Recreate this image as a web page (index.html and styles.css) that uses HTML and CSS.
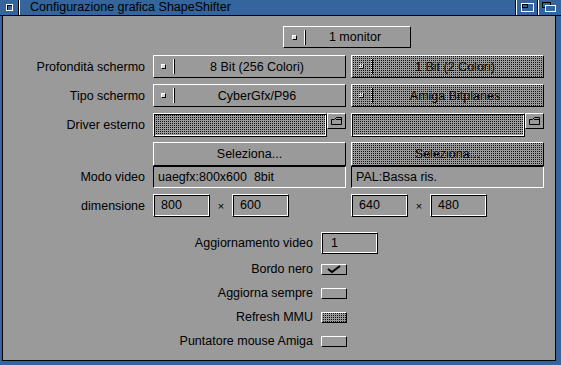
FILE: index.html
```html
<!DOCTYPE html>
<html lang="it">
<head>
    <meta charset="UTF-8">
    <title>Configurazione grafica ShapeShifter</title>
    <link rel="stylesheet" href="styles.css">
</head>
<body>
    <div class="window">
        <div class="titlebar">
            <div class="close-gad"><span class="close-box"></span></div>
            <div class="title">Configurazione grafica ShapeShifter</div>
            <div class="depth-gad zoom-gad">
                <svg width="22" height="15" viewBox="0 0 22 15">
                    <rect x="6.5" y="3.5" width="12" height="8" fill="none" stroke="#fff"/>
                    <rect x="7.5" y="4.5" width="5" height="3" fill="none" stroke="#000"/>
                </svg>
            </div>
            <div class="depth-gad back-gad">
                <svg width="24" height="15" viewBox="0 0 24 15">
                    <rect x="5.5" y="2.5" width="8" height="5" fill="none" stroke="#000"/>
                    <rect x="8.5" y="5.5" width="10" height="6" fill="#34659c" stroke="#fff"/>
                </svg>
            </div>
        </div>

        <div class="frame">
            <div class="monitor-row">
                <div class="cycle monitor">
                    <span class="cycle-icon"></span><span class="cycle-sep"></span>
                    <span class="cycle-text">1 monitor</span>
                </div>
            </div>

            <div class="row r1">
                <div class="label">Profondità schermo</div>
                <div class="cycle">
                    <span class="cycle-icon"></span><span class="cycle-sep"></span>
                    <span class="cycle-text">8 Bit (256 Colori)</span>
                </div>
                <div class="cycle ghost">
                    <span class="cycle-icon"></span><span class="cycle-sep"></span>
                    <span class="cycle-text">1 Bit (2 Colori)</span>
                </div>
            </div>

            <div class="row r2">
                <div class="label">Tipo schermo</div>
                <div class="cycle">
                    <span class="cycle-icon"></span><span class="cycle-sep"></span>
                    <span class="cycle-text">CyberGfx/P96</span>
                </div>
                <div class="cycle ghost">
                    <span class="cycle-icon"></span><span class="cycle-sep"></span>
                    <span class="cycle-text">Amiga Bitplanes</span>
                </div>
            </div>

            <div class="row r3">
                <div class="label">Driver esterno</div>
                <div class="driver">
                    <div class="string ghost wide"></div>
                    <div class="file-btn">
                        <svg width="17" height="13" viewBox="0 0 17 13">
                            <path d="M3.5 10.5V5.5H6.5L8.5 3.5H13.5V10.5Z" fill="none" stroke="#000"/>
                            <path d="M8 5.5H13" stroke="#000"/>
                        </svg>
                    </div>
                </div>
                <div class="driver">
                    <div class="string ghost wide"></div>
                    <div class="file-btn">
                        <svg width="17" height="13" viewBox="0 0 17 13">
                            <path d="M3.5 10.5V5.5H6.5L8.5 3.5H13.5V10.5Z" fill="none" stroke="#000"/>
                            <path d="M8 5.5H13" stroke="#000"/>
                        </svg>
                    </div>
                </div>
            </div>

            <div class="row r4">
                <div class="label"></div>
                <div class="button">Seleziona...</div>
                <div class="button ghost">Seleziona...</div>
            </div>

            <div class="row r5">
                <div class="label">Modo video</div>
                <div class="readout">uaegfx:800x600&nbsp;&nbsp;8bit</div>
                <div class="readout">PAL:Bassa ris.</div>
            </div>

            <div class="row r6">
                <div class="label">dimensione</div>
                <div class="dims">
                    <div class="string num">800</div>
                    <span class="times">×</span>
                    <div class="string num">600</div>
                </div>
                <div class="dims">
                    <div class="string num">640</div>
                    <span class="times">×</span>
                    <div class="string num">480</div>
                </div>
            </div>

            <div class="options">
                <div class="opt opt-field">
                    <div class="opt-label">Aggiornamento video</div>
                    <div class="string num">1</div>
                </div>
                <div class="opt">
                    <div class="opt-label">Bordo nero</div>
                    <div class="check">
                        <svg width="24" height="9" viewBox="0 0 24 9">
                            <path d="M6 4L10 7L18 1" fill="none" stroke="#000" stroke-width="2"/>
                        </svg>
                    </div>
                </div>
                <div class="opt">
                    <div class="opt-label">Aggiorna sempre</div>
                    <div class="check"></div>
                </div>
                <div class="opt">
                    <div class="opt-label">Refresh MMU</div>
                    <div class="check ghost"></div>
                </div>
                <div class="opt">
                    <div class="opt-label">Puntatore mouse Amiga</div>
                    <div class="check"></div>
                </div>
            </div>
        </div>
    </div>
</body>
</html>
```

FILE: styles.css
```css
* {
    box-sizing: border-box;
}
body {
    margin: 0;
    background-color: #9a9a9a;
    font-family: "Liberation Sans", Arial, sans-serif;
    font-size: 12.5px;
    color: #000;
}
.window {
    width: 561px;
    height: 365px;
    background-color: #34659c;
    display: flex;
    flex-direction: column;
}

/* title bar */
.titlebar {
    height: 16px;
    display: flex;
    border-bottom: 1px solid #000;
}
.close-gad {
    width: 20px;
    box-shadow: inset -1px 0 0 #fff, inset -2px 0 0 #000;
    padding: 4px 0 0 6px;
}
.close-box {
    display: block;
    width: 7px;
    height: 7px;
    border: 1px solid #fff;
    box-shadow: inset 1px 1px 0 #000;
}
.title {
    flex: 1;
    padding-left: 10px;
    line-height: 15px;
}
.depth-gad {
    box-shadow: inset 1px 0 0 #000, inset 2px 0 0 #fff;
}
.depth-gad svg {
    display: block;
}
.zoom-gad {
    width: 22px;
}
.back-gad {
    width: 24px;
}

/* main frame */
.frame {
    flex: 1;
    margin: 0 5px 4px 2px;
    background-color: #9a9a9a;
    border: 1px solid #000;
    border-top: none;
}
.monitor-row {
    padding: 10px 0 0 280px;
}
.row {
    display: grid;
    grid-template-columns: 145px 193px 193px;
    column-gap: 5px;
    align-items: center;
}
.label {
    text-align: right;
    padding-right: 3px;
    white-space: nowrap;
}
.r1 { margin-top: 7px; height: 23px; }
.r2 { margin-top: 6px; height: 23px; }
.r3 { margin-top: 6px; height: 24px; align-items: start; }
.r3 .label { line-height: 24px; }
.r4 { margin-top: 5px; height: 24px; }
.r5 { height: 22px; }
.r6 { margin-top: 6px; height: 23px; }

/* gadgets */
.cycle, .button, .file-btn, .check {
    background-color: #9a9a9a;
    border: 1px solid;
    border-color: #fff #000 #000 #fff;
}
.cycle {
    height: 23px;
    display: flex;
    align-items: center;
    padding-left: 7px;
}
.monitor {
    width: 128px;
    height: 22px;
    padding-left: 8px;
}
.cycle-icon {
    width: 5px;
    height: 5px;
    background-color: #d8d8d8;
    border: 1px solid;
    border-color: #fff #000 #000 #fff;
}
.cycle-sep {
    width: 2px;
    height: 15px;
    margin-left: 7px;
    border-left: 1px solid #fff;
    border-right: 1px solid #000;
}
.cycle-text {
    flex: 1;
    text-align: center;
    padding-right: 6px;
}
.button {
    height: 24px;
    line-height: 22px;
    text-align: center;
}
.string {
    border: 1px solid;
    border-color: #fff #000 #000 #fff;
    box-shadow: inset 1px 1px 0 #000, inset -1px -1px 0 #fff;
}
.driver {
    display: flex;
    align-items: flex-start;
}
.string.wide {
    width: 176px;
    height: 24px;
}
.file-btn {
    width: 19px;
    height: 16px;
    flex-shrink: 0;
}
.file-btn svg {
    display: block;
}
.readout {
    height: 22px;
    line-height: 20px;
    padding-left: 4px;
    border: 1px solid;
    border-color: #000 #fff #fff #000;
    white-space: pre;
}
.dims {
    display: flex;
    align-items: center;
}
.num {
    width: 57px;
    height: 23px;
    line-height: 21px;
    padding-left: 7px;
}
.times {
    width: 22px;
    text-align: center;
    font-size: 11px;
}

/* disabled overlay */
.ghost {
    position: relative;
}
.ghost::after {
    content: "";
    position: absolute;
    inset: 0;
    background: conic-gradient(#111 0 25%, transparent 0) 0 0 / 2px 2px;
}
.string.ghost::after {
    inset: 1px;
}

/* lower options */
.options {
    margin-top: 15px;
}
.opt {
    display: grid;
    grid-template-columns: 318px auto;
    align-items: center;
    height: 24px;
}
.opt-field {
    height: 22px;
    margin-bottom: 3px;
}
.opt-field .num {
    height: 22px;
    padding-left: 9px;
}
.opt-label {
    text-align: right;
    padding-right: 8px;
    white-space: nowrap;
}
.check {
    width: 26px;
    height: 11px;
}
.check svg {
    display: block;
}
```
